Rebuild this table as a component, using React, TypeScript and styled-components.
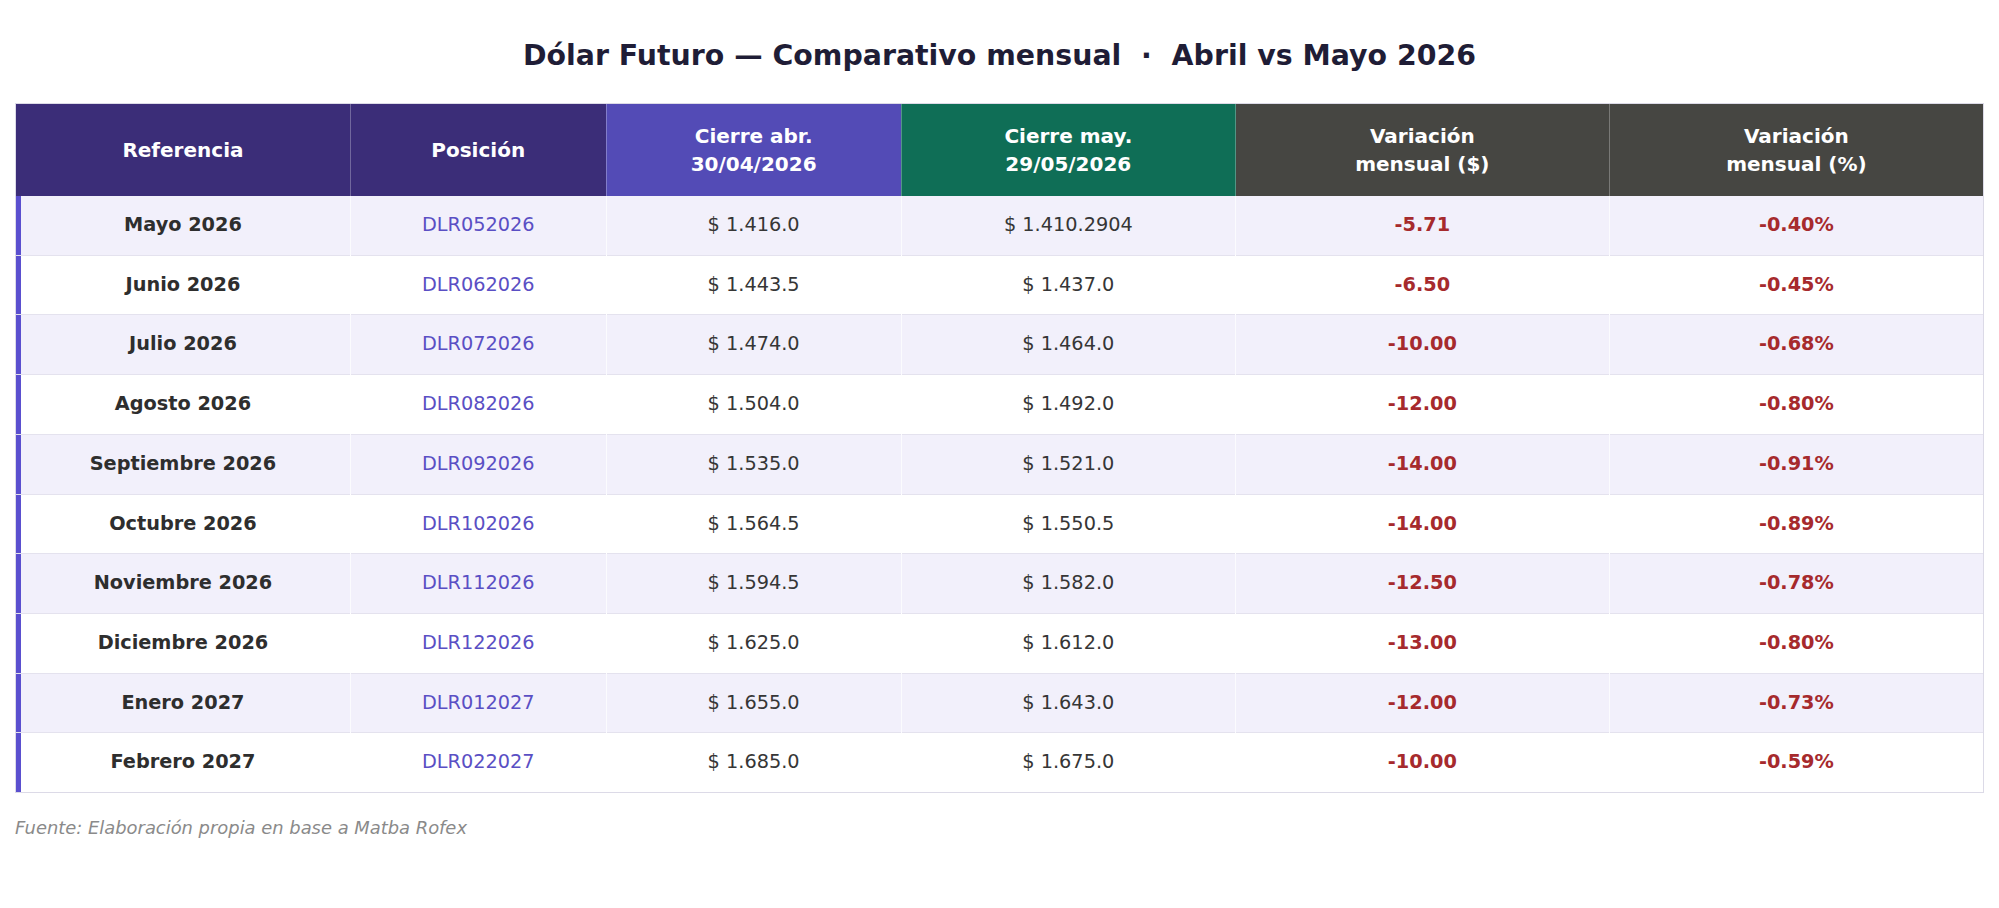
import React from "react";
import styled, { createGlobalStyle } from "styled-components";

const GlobalStyle = createGlobalStyle`
  html, body { margin: 0; padding: 0; background: #ffffff; }
  body { font-family: "DejaVu Sans", "Liberation Sans", sans-serif; }
`;

const Page = styled.div`
  padding: 38px 15px 40px;
  box-sizing: border-box;
  width: 1999px;
`;

const Title = styled.h1`
  margin: 0 0 29px;
  text-align: center;
  font-size: 28.4px;
  line-height: 36px;
  font-weight: 700;
  color: #1f1d36;
`;

const TableFrame = styled.div`
  border: 1.5px solid #dcdae7;
`;

const Table = styled.table`
  width: 100%;
  border-collapse: collapse;
  table-layout: fixed;
`;

const HeadCell = styled.th<{ $bg: string }>`
  background: ${(p) => p.$bg};
  color: #ffffff;
  font-size: 20px;
  font-weight: 700;
  line-height: 28px;
  padding: 18px 10px;
  text-align: center;
  border-left: 1px solid rgba(255, 255, 255, 0.28);
  &:first-child { border-left: none; }
`;

const Row = styled.tr<{ $alt: boolean }>`
  background: ${(p) => (p.$alt ? "#f2f0fb" : "#ffffff")};
  border-top: 1px solid #e4e2ee;
  &:first-child { border-top: none; }
`;

const Cell = styled.td<{ $kind: "ref" | "pos" | "price" | "var" }>`
  padding: 18px 10px;
  line-height: 22.7px;
  font-size: 19.3px;
  text-align: center;
  border-left: 1px solid rgba(255, 255, 255, 0.7);
  font-weight: ${(p) => (p.$kind === "ref" || p.$kind === "var" ? 700 : 400)};
  color: ${(p) =>
    p.$kind === "ref"
      ? "#2e2e2e"
      : p.$kind === "pos"
      ? "#5a4fc4"
      : p.$kind === "var"
      ? "#a62a2d"
      : "#363636"};
  &:first-child {
    border-left: none;
    box-shadow: inset 5px 0 0 #5a4fcf;
  }
`;

const Footer = styled.p`
  margin: 25px 0 0;
  font-size: 17.9px;
  line-height: 20px;
  font-style: italic;
  color: #8a8a8a;
`;

const cols = ["17%", "13%", "15%", "17%", "19%", "19%"];

const headers: { label: React.ReactNode; bg: string }[] = [
  { label: "Referencia", bg: "#3b2d78" },
  { label: "Posición", bg: "#3b2d78" },
  { label: <>Cierre abr.<br />30/04/2026</>, bg: "#534bb6" },
  { label: <>Cierre may.<br />29/05/2026</>, bg: "#0f6e56" },
  { label: <>Variación<br />mensual ($)</>, bg: "#464642" },
  { label: <>Variación<br />mensual (%)</>, bg: "#464642" },
];

const rows = [
  ["Mayo 2026", "DLR052026", "$ 1.416.0", "$ 1.410.2904", "-5.71", "-0.40%"],
  ["Junio 2026", "DLR062026", "$ 1.443.5", "$ 1.437.0", "-6.50", "-0.45%"],
  ["Julio 2026", "DLR072026", "$ 1.474.0", "$ 1.464.0", "-10.00", "-0.68%"],
  ["Agosto 2026", "DLR082026", "$ 1.504.0", "$ 1.492.0", "-12.00", "-0.80%"],
  ["Septiembre 2026", "DLR092026", "$ 1.535.0", "$ 1.521.0", "-14.00", "-0.91%"],
  ["Octubre 2026", "DLR102026", "$ 1.564.5", "$ 1.550.5", "-14.00", "-0.89%"],
  ["Noviembre 2026", "DLR112026", "$ 1.594.5", "$ 1.582.0", "-12.50", "-0.78%"],
  ["Diciembre 2026", "DLR122026", "$ 1.625.0", "$ 1.612.0", "-13.00", "-0.80%"],
  ["Enero 2027", "DLR012027", "$ 1.655.0", "$ 1.643.0", "-12.00", "-0.73%"],
  ["Febrero 2027", "DLR022027", "$ 1.685.0", "$ 1.675.0", "-10.00", "-0.59%"],
];

const kinds: ("ref" | "pos" | "price" | "var")[] = ["ref", "pos", "price", "price", "var", "var"];

export default function App() {
  return (
    <Page>
      <GlobalStyle />
      <Title>Dólar Futuro — Comparativo mensual&nbsp; ·&nbsp; Abril vs Mayo 2026</Title>
      <TableFrame>
        <Table>
          <colgroup>
            {cols.map((w, i) => (
              <col key={i} style={{ width: w }} />
            ))}
          </colgroup>
          <thead>
            <tr>
              {headers.map((h, i) => (
                <HeadCell key={i} $bg={h.bg}>{h.label}</HeadCell>
              ))}
            </tr>
          </thead>
          <tbody>
            {rows.map((r, i) => (
              <Row key={i} $alt={i % 2 === 0}>
                {r.map((c, j) => (
                  <Cell key={j} $kind={kinds[j]}>{c}</Cell>
                ))}
              </Row>
            ))}
          </tbody>
        </Table>
      </TableFrame>
      <Footer>Fuente: Elaboración propia en base a Matba Rofex</Footer>
    </Page>
  );
}
